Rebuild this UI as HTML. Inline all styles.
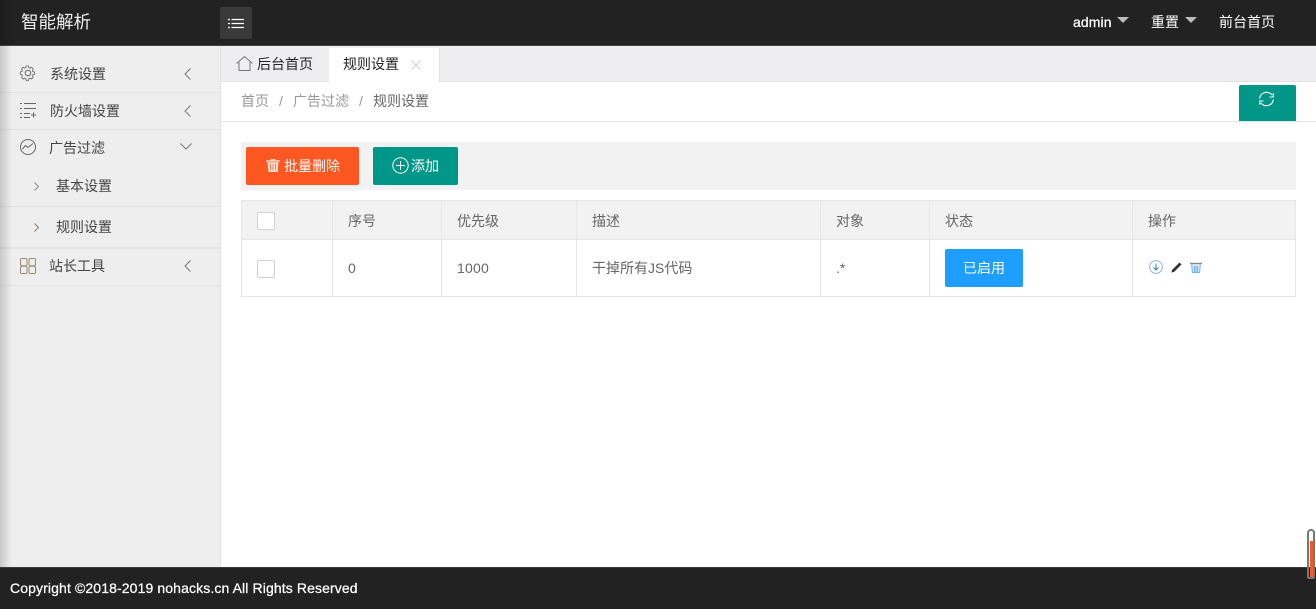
<!DOCTYPE html>
<html lang="zh"><head><meta charset="utf-8"><title>规则设置</title>
<style>
*{box-sizing:border-box}
html,body{margin:0;padding:0;width:1316px;height:609px;overflow:hidden;background:#fff;font-family:"Liberation Sans","Noto Sans CJK SC",sans-serif;font-size:14px;color:#666}
.a{position:absolute;white-space:nowrap}
svg{position:absolute;overflow:visible;fill:none}
.menu{left:0;width:220px;border-bottom:1px solid #e2e2e2;color:#444}
.cell{position:absolute;top:200px;width:1px;height:97px;background:#e6e6e6}
.th{top:211px;line-height:20px;color:#666}
.td{top:258px;line-height:20px;color:#666}
.cb{width:18px;height:18px;border:1px solid #d2d2d2;border-radius:2px;background:#fff;left:257px}
</style></head><body>
<!-- sidebar -->
<div class="a" style="left:0;top:46px;width:221px;height:521px;background:#eeeeee;border-right:1px solid #e2e2e2"></div>
<div class="a menu" style="top:46px;height:47px"></div>
<div class="a menu" style="top:93px;height:37px"></div>
<div class="a menu" style="top:130px;height:37px;border:0"></div>
<div class="a menu" style="top:167px;height:40px"></div>
<div class="a menu" style="top:207px;height:42px;border-bottom:2px solid #e4e4e4"></div>
<div class="a menu" style="top:249px;height:37px"></div>

<div class="a" style="left:50px;top:64px;line-height:20px;color:#444">系统设置</div>
<div class="a" style="left:50px;top:101px;line-height:20px;color:#444">防火墙设置</div>
<div class="a" style="left:49px;top:138px;line-height:20px;color:#444">广告过滤</div>
<div class="a" style="left:56px;top:176px;line-height:20px;color:#444">基本设置</div>
<div class="a" style="left:56px;top:217px;line-height:20px;color:#444">规则设置</div>
<div class="a" style="left:49px;top:256px;line-height:20px;color:#444">站长工具</div>

<!-- sidebar icons -->
<svg style="left:20px;top:65px" width="16" height="16" viewBox="0 0 16 16" stroke="#666" stroke-width="1"><circle cx="8" cy="8" r="2.800"/><path d="M6.500.5h3l.4 2 1.500.6 1.700-1.100 2.100 2.100-1.100 1.700.6 1.500 2 .4v3l-2 .4-.6 1.500 1.100 1.700-2.100 2.100-1.700-1.100-1.500.6-.4 2h-3l-.4-2-1.500-.6-1.700 1.100-2.100-2.100 1.100-1.700-.6-1.500-2-.4v-3l2-.4.6-1.500-1.100-1.700 2.100-2.100 1.700 1.100 1.500-.6z" transform="translate(.8 .6) scale(.82)"/></svg>
<svg style="left:20px;top:102px" width="16" height="16" viewBox="0 0 16 16" stroke="#666"><path d="M0 1.500h2M4 1.500h12M0 6.500h2M4 6.500h12M0 11.500h2M4 11.500h6M0 15.500h2M4 15.500h6M11 13h5M13.500 10.500v5"/></svg>
<svg style="left:20px;top:139px" width="16" height="16" viewBox="0 0 16 16" stroke="#666"><circle cx="8" cy="8" r="7.500"/><path d="M2.500 10l3-3.500 2.500 2 5-4"/></svg>
<svg style="left:20px;top:258px" width="16" height="16" viewBox="0 0 16 16" stroke="#9c8a70"><rect x=".5" y=".5" width="6.500" height="7" rx="1.200"/><rect x="9" y=".5" width="6.500" height="7" rx="1.200"/><rect x=".5" y="8.500" width="6.500" height="7" rx="1.200"/><rect x="9" y="8.500" width="6.500" height="7" rx="1.200"/><path d="M2 8h4M10 8h4" stroke="#aaa" stroke-width="2"/></svg>

<svg style="left:184px;top:68px" width="8" height="12" stroke="#777"><path d="M6.500 .5L1 6l5.500 5.500"/></svg>
<svg style="left:184px;top:105px" width="8" height="12" stroke="#777"><path d="M6.500 .5L1 6l5.500 5.500"/></svg>
<svg style="left:180px;top:143px" width="12" height="8" stroke="#777"><path d="M.5 .5L6 6l5.500-5.500"/></svg>
<svg style="left:184px;top:260px" width="8" height="12" stroke="#777"><path d="M6.500 .5L1 6l5.500 5.500"/></svg>
<svg style="left:34px;top:182px" width="5" height="9" stroke="#888"><path d="M.5 .5L4.500 4.500 .5 8.500"/></svg>
<svg style="left:34px;top:223px" width="5" height="9" stroke="#8a7a68"><path d="M.5 .5L4.500 4.500 .5 8.500"/></svg>

<!-- header -->
<div class="a" style="left:0;top:0;width:1316px;height:46px;background:#222;border-bottom:1px solid #444"></div>
<div class="a" style="left:21px;top:10px;font-size:17.500px;line-height:24px;color:#eee">智能解析</div>
<div class="a" style="left:220px;top:7px;width:32px;height:32px;background:#393939;border-radius:2px"></div>
<svg style="left:228px;top:18px" width="16" height="11" stroke="#fff" stroke-width="1.300"><path d="M0 1.500h2M3.500 1.500H16M0 5.500h2M3.500 5.500H16M0 9.500h2M3.500 9.500H16"/></svg>
<div class="a" style="left:1073px;top:12px;line-height:20px;color:#fff;letter-spacing:.1px;-webkit-text-stroke:.25px #fff">admin</div>
<div class="a" style="left:1117px;top:17px;border:6px solid transparent;border-top-color:#bbb;border-bottom:0"></div>
<div class="a" style="left:1151px;top:12px;line-height:20px;color:#fff">重置</div>
<div class="a" style="left:1185px;top:17px;border:6px solid transparent;border-top-color:#bbb;border-bottom:0"></div>
<div class="a" style="left:1219px;top:12px;line-height:20px;color:#fff">前台首页</div>

<!-- tabs -->
<div class="a" style="left:221px;top:46px;width:1095px;height:36px;background:#eeeef0;border-bottom:1px solid #e2e2e2"></div>
<div class="a" style="left:329px;top:48px;width:111px;height:34px;background:#fff;border-right:1px solid #e2e2e2"></div>
<svg style="left:236px;top:56px" width="17" height="15" stroke="#777"><path d="M.5 7.500L8.500 .5l8 7M3 6v8.500h11V6"/></svg>
<div class="a" style="left:257px;top:54px;line-height:20px;color:#222">后台首页</div>
<div class="a" style="left:343px;top:54px;line-height:20px;color:#222">规则设置</div>
<svg style="left:411px;top:60px" width="10" height="10" stroke="#ccc"><path d="M.5 .5l9 9M9.500 .5l-9 9"/></svg>

<!-- breadcrumb -->
<div class="a" style="left:221px;top:121px;width:1095px;height:1px;background:#e6e6e6"></div>
<div class="a" style="left:241px;top:91px;line-height:20px;color:#999">首页</div>
<div class="a" style="left:279px;top:91px;line-height:20px;color:#999">/</div>
<div class="a" style="left:293px;top:91px;line-height:20px;color:#999">广告过滤</div>
<div class="a" style="left:359px;top:91px;line-height:20px;color:#999">/</div>
<div class="a" style="left:373px;top:91px;line-height:20px;color:#666">规则设置</div>
<div class="a" style="left:1239px;top:85px;width:57px;height:36px;background:#009688;border-radius:2px 2px 0 0"></div>
<svg style="left:1258px;top:91px" width="17" height="16" viewBox="0 0 17 16" stroke="#fff" stroke-width="1.100"><path d="M1.600 7.500A7 7 0 0 1 14 4"/><path d="M15.400 8.500A7 7 0 0 1 3 12"/><path d="M15.200 2.200V6H11.500"/><path d="M1.800 13.800V10H5.500"/></svg>

<!-- toolbar -->
<div class="a" style="left:241px;top:142px;width:1055px;height:48px;background:#f2f2f2"></div>
<div class="a" style="left:246px;top:147px;width:113px;height:38px;background:#ff5722;border-radius:2px"></div>
<div class="a" style="left:373px;top:147px;width:85px;height:38px;background:#009688;border-radius:2px"></div>
<svg style="left:266px;top:159px" width="14" height="13" viewBox="0 0 14 13"><path d="M0 1.200h14v1.400H0zM4.500 0h5v1.300h-5z" fill="#ffd9cc"/><path d="M1.500 3.200h11l-1 9.800h-9z" fill="#ffe3da"/><path d="M4.500 4.800v6.500M7 4.800v6.500M9.500 4.800v6.500" stroke="#ff7a50"/></svg>
<div class="a" style="left:284px;top:156px;line-height:20px;color:#fff">批量删除</div>
<svg style="left:392px;top:157px" width="17" height="17" stroke="#fff"><circle cx="8.500" cy="8.500" r="7.700"/><path d="M8.500 4v9M4 8.500h9"/></svg>
<div class="a" style="left:411px;top:156px;line-height:20px;color:#fff">添加</div>

<!-- table -->
<div class="a" style="left:241px;top:200px;width:1055px;height:97px;border:1px solid #e6e6e6;background:#fff"></div>
<div class="a" style="left:242px;top:201px;width:1053px;height:39px;background:#f2f2f2;border-bottom:1px solid #e6e6e6"></div>
<div class="cell" style="left:332px"></div><div class="cell" style="left:441px"></div><div class="cell" style="left:576px"></div><div class="cell" style="left:820px"></div><div class="cell" style="left:929px"></div><div class="cell" style="left:1132px"></div>
<div class="a cb" style="top:212px"></div>
<div class="a th" style="left:348px">序号</div>
<div class="a th" style="left:457px">优先级</div>
<div class="a th" style="left:592px">描述</div>
<div class="a th" style="left:836px">对象</div>
<div class="a th" style="left:945px">状态</div>
<div class="a th" style="left:1148px">操作</div>
<div class="a cb" style="top:260px"></div>
<div class="a td" style="left:348px">0</div>
<div class="a td" style="left:457px;letter-spacing:.2px">1000</div>
<div class="a td" style="left:592px">干掉所有JS代码</div>
<div class="a td" style="left:836px">.*</div>
<div class="a" style="left:945px;top:249px;width:78px;height:38px;background:#1e9fff;border-radius:2px;color:#fff;text-align:center;line-height:38px">已启用</div>
<svg style="left:1149px;top:260px" width="14" height="14" stroke="#5aa5e0"><circle cx="7" cy="7" r="6.400" stroke="#8fb6d8"/><path d="M7 3.500v6M4.500 7.500L7 10l2.500-2.500" stroke="#3a7fc0"/></svg>
<svg style="left:1171px;top:262px" width="11" height="11" viewBox="0 0 11 11"><path d="M8.500 .5l2 2L3 10 .5 10.500 1 8z" fill="#333"/></svg>
<svg style="left:1190px;top:262px" width="12" height="11" viewBox="0 0 12 11"><path d="M0 .8h12v1.400H0z" fill="#888"/><path d="M1.200 2.500h9.600l-.8 8.500H2z" fill="#cfe8fa"/><path d="M1.700 2.500L2.400 10.500h7.200l.7-8" stroke="#6db8ee"/><path d="M4.500 4v6M6 4v6M7.500 4v6" stroke="#5fa8e0" stroke-width=".8"/></svg>

<!-- footer -->
<div class="a" style="left:0;top:567px;width:1316px;height:42px;background:#222;border-top:1px solid #3a3a3a"></div>
<div class="a" style="left:10px;top:578px;line-height:20px;color:#fff;letter-spacing:.115px;-webkit-text-stroke:.25px #fff">Copyright ©2018-2019 nohacks.cn All Rights Reserved</div>
<div class="a" style="left:1307px;top:529px;width:8px;height:50px;border:2px solid #777;border-radius:4px 4px 2px 2px;background:transparent"></div>
<div class="a" style="left:1310px;top:541px;width:3px;height:36px;background:#ff5722"></div>

<!-- left edge shadow -->
<div class="a" style="left:0;top:0;width:12px;height:567px;background:linear-gradient(90deg,rgba(0,0,0,.16),rgba(0,0,0,0))"></div>
</body></html>
